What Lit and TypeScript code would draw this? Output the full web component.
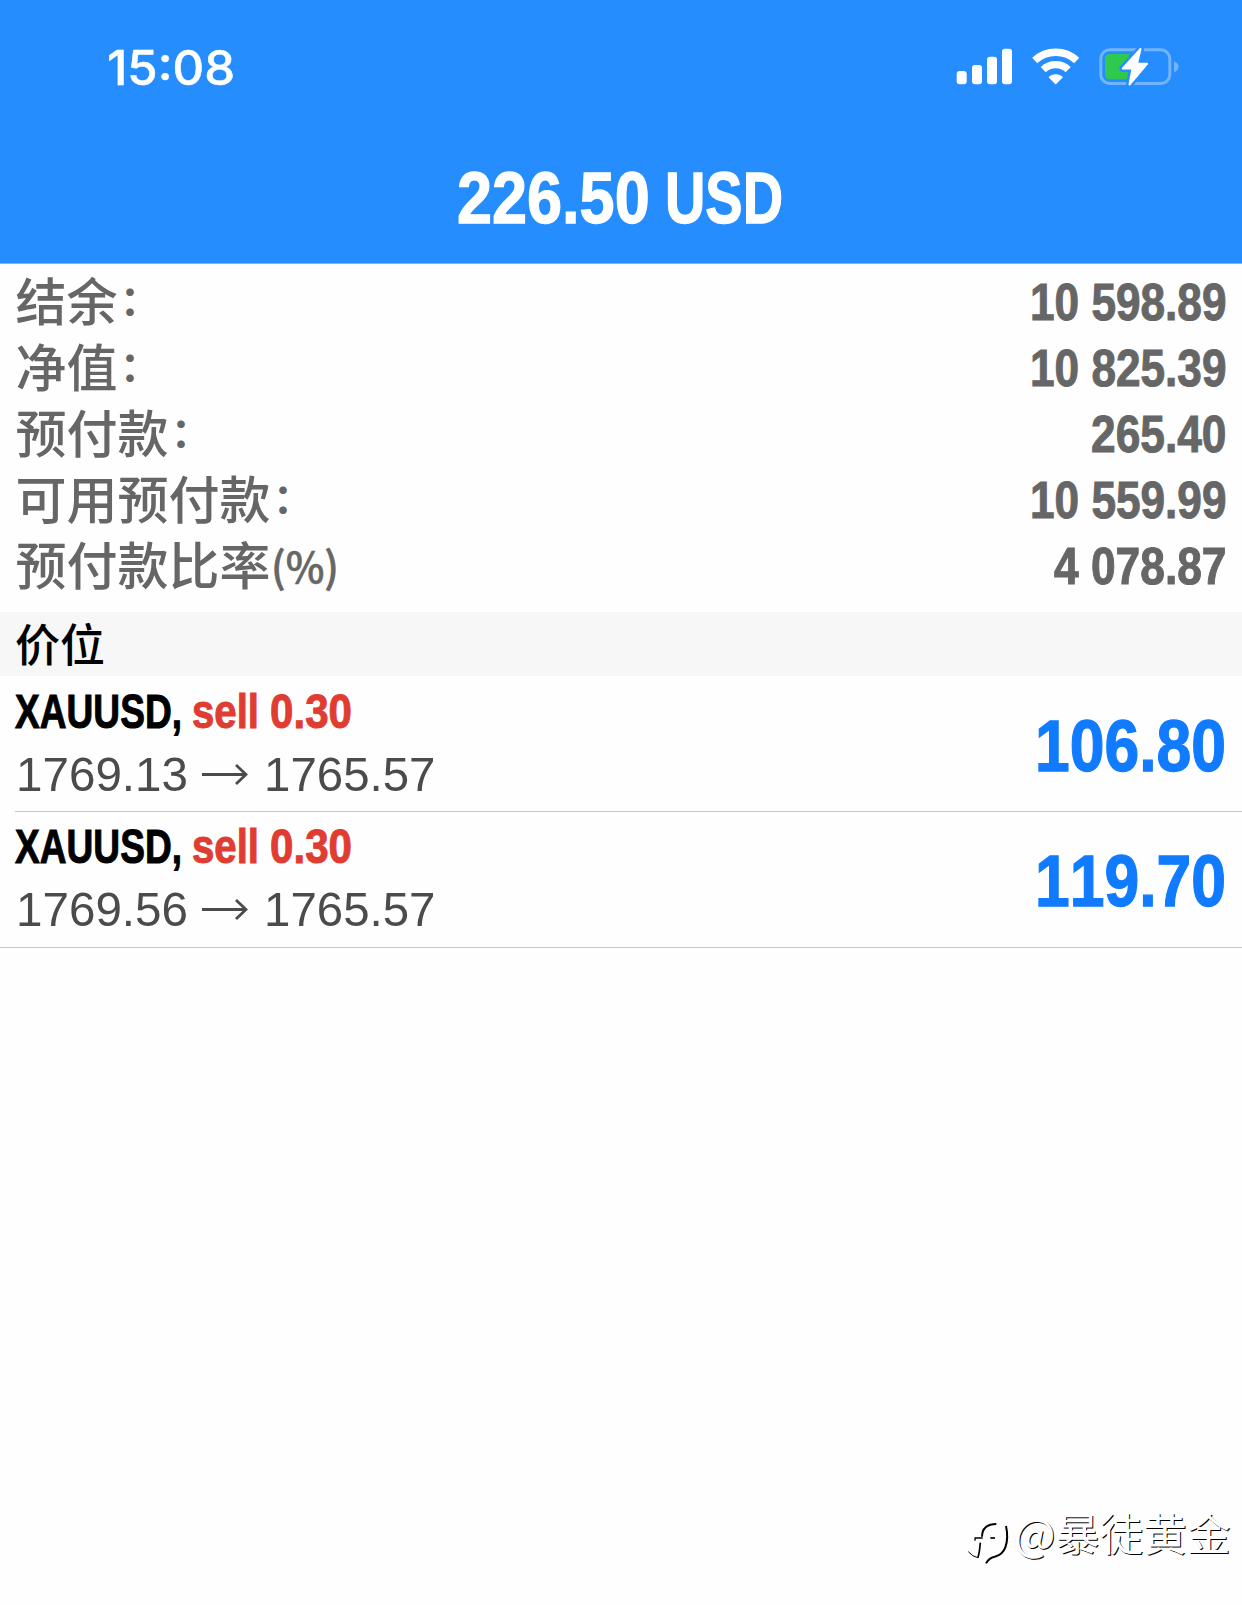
import { LitElement, html, css, svg } from "lit";
import { customElement, property } from "lit/decorators.js";

/** Real text set to an exact advance width, used for the condensed faces. Baseline sits 1em below its top. */
@customElement("fit-text")
class FitText extends LitElement {
  @property() text = "";
  @property({ type: Number }) width = 0;
  static styles = css`
    :host { display: block; line-height: 0; }
    svg { display: block; overflow: visible; height: 1.22em; }
    text { fill: currentColor; stroke: currentColor; stroke-width: var(--heavy, 0); white-space: pre; font-kerning: none; }
  `;
  render() {
    return html`<svg width=${this.width}>
      ${svg`<text x="0" y="1em" textLength=${this.width} lengthAdjust="spacingAndGlyphs">${this.text}</text>`}
    </svg>`;
  }
}

const summary = [
  { label: "结余", colon: true, value: "10 598.89", width: 196.5 },
  { label: "净值", colon: true, value: "10 825.39", width: 196.5 },
  { label: "预付款", colon: true, value: "265.40", width: 135.5 },
  { label: "可用预付款", colon: true, value: "10 559.99", width: 196.5 },
  { label: "预付款比率", colon: false, value: "4 078.87", width: 172.5 },
];

const positions = [
  { open: "1769.13", now: "1765.57", profit: "106.80" },
  { open: "1769.56", now: "1765.57", profit: "119.70" },
];

@customElement("app-root")
class AppRoot extends LitElement {
  static styles = css`
    :host {
      display: flex; flex-direction: column; position: relative;
      width: 1242px; height: 1605px; overflow: hidden; background: #fefefe;
      font-family: "Liberation Sans", "Noto Sans CJK SC", sans-serif;
    }
    * { box-sizing: border-box; }
    header { height: 264px; background: #268dff; color: #fff; border-bottom: 1px solid #86b4ee; display: flex; flex-direction: column; flex: none; }
    .status { flex: none; display: flex; justify-content: space-between; height: 100px; padding: 37px 63px 0 107px; }
    .time { font: 500 47.5px "Inter", sans-serif; --heavy: 0.5px; }
    .icons { display: block; height: 48px; width: 224px; margin-top: 3px; }
    .title { display: flex; justify-content: center; gap: 15px; padding: 50px 2px 0 0; font-size: 73px; font-weight: 700; --heavy: 1.3px; }
    .summary { flex: none; height: 348px; padding: 1px 16px 0 15.5px; display: flex; flex-direction: column; }
    .line { display: flex; height: 66px; justify-content: space-between; color: #666; }
    .label { font: 500 51px/69px "Noto Sans CJK SC", sans-serif; display: flex; }
    .colon { font-size: 40px; font-weight: 700; line-height: 67px; padding-left: 2.5px; }
    .pct { font-size: 42px; font-weight: 500; padding-top: 12px; --heavy: 0.6px; }
    .value { padding-top: 3px; font-size: 52px; font-weight: 700; --heavy: 1px; }
    .section { flex: none; height: 64px; background: #f7f7f7; padding-left: 15px; font: 500 45px/62px "Noto Sans CJK SC", sans-serif; color: #000; }
    .deal { flex: none; height: 136px; display: flex; justify-content: space-between; padding-right: 16px; margin-left: 15px; border-bottom: 1px solid #c6c6c9; }
    .deal:last-of-type { margin-left: 0; padding-left: 15px; }
    .head { display: flex; height: 66px; padding-top: 2.5px; font-size: 48.5px; font-weight: 700; color: #000; --heavy: 1px; }
    .deal:last-of-type .head { height: 65px; padding-top: 1.5px; }
    .sell { color: #e03c31; display: flex; gap: 11px; padding-left: 10px; }
    .prices { display: flex; height: 63px; font-size: 49px; color: #4b4b4b; padding-left: 1px; }
    .arrow { display: block; margin: 17px 16px 0 14px; }
    .profit { padding-top: 22px; font-size: 73px; font-weight: 700; color: #107bff; --heavy: 1.3px; }
    .deal:last-of-type .profit { padding-top: 21px; }
    .mark { position: absolute; left: 962px; top: 1502px; display: flex; color: #fff; }
    .mark svg { display: block; margin-top: 8px; }
    .mark span { font: 400 43.8px/60px "Noto Sans CJK SC", sans-serif; text-shadow: 1px 1px 0.5px #000; }
  `;
  render() {
    return html`
      <header>
        <div class="status">
          <fit-text class="time" text="15:08" width="128"></fit-text>
          <svg class="icons" width="224" height="48" viewBox="0 0 224 48" fill="#fff">
            <rect x="1.700" y="31" width="10" height="13.300" rx="3"/>
            <rect x="17" y="25" width="10" height="19.300" rx="3"/>
            <rect x="32" y="16.700" width="10" height="27.600" rx="3"/>
            <rect x="47" y="8.700" width="10" height="35.600" rx="3"/>
            <g fill="none" stroke="#fff" stroke-width="7.400">
              <path d="M79.700 20.500A30.800 30.800 0 0 1 121.700 20.500"/>
              <path d="M88.200 29.600A18.300 18.300 0 0 1 113.200 29.600"/>
            </g>
            <path d="M100.700 43.400 94.500 37.200A10 10 0 0 1 106.900 37.200Z" stroke="#fff" stroke-width="1.500" stroke-linejoin="round"/>
            <rect x="145.800" y="9.800" width="69" height="33.700" rx="9" fill="none" stroke="#73b5fd" stroke-width="3"/>
            <path d="M219 21.300Q223.500 23 223.500 26.800T219 32.300Z" fill="#73b5fd"/>
            <path d="M155 14H174V39.300H155Q150 39.300 150 34.300V19Q150 14 155 14Z" fill="#30c94f"/>
            <path d="M185.500 9 167.800 28.500H177.500L174.500 44.500 192 23.800H182Z" stroke="#268dff" stroke-width="7" stroke-linejoin="round"/>
            <path d="M185.500 9 167.800 28.500H177.500L174.500 44.500 192 23.800H182Z" stroke="#fff" stroke-width="2" stroke-linejoin="round"/>
          </svg>
        </div>
        <div class="title">
          <fit-text text="226.50" width="192.700"></fit-text>
          <fit-text text="USD" width="118"></fit-text>
        </div>
      </header>
      <section class="summary">
        ${summary.map((r) => html`<div class="line">
          <div class="label"><span>${r.label}</span>${r.colon
            ? html`<span class="colon">：</span>`
            : html`<fit-text class="pct" text="(%)" width="68"></fit-text>`}</div>
          <fit-text class="value" text=${r.value} width=${r.width}></fit-text>
        </div>`)}
      </section>
      <div class="section">价位</div>
      ${positions.map((p) => html`<article class="deal">
        <div>
          <div class="head">
            <fit-text text="XAUUSD," width="167"></fit-text>
            <span class="sell"><fit-text text="sell" width="67"></fit-text><fit-text text="0.30" width="82"></fit-text></span>
          </div>
          <div class="prices">
            <fit-text text=${p.open} width="172"></fit-text>
            <svg class="arrow" width="46" height="32" viewBox="0 0 46 32" fill="none" stroke="#4b4b4b" stroke-width="2.800"><path d="M0 15.500H44M34 6 44 15.500 34 25"/></svg>
            <fit-text text=${p.now} width="171.500"></fit-text>
          </div>
        </div>
        <fit-text class="profit" text=${p.profit} width="191"></fit-text>
      </article>`)}
      <div class="mark">
        <svg width="52" height="56" viewBox="0 0 156 168" fill="none" stroke="#000" stroke-linejoin="round">
          <path d="M60 80Q60 43 103 42" stroke-width="6"/>
          <path d="M39 92V84H62" stroke-width="4"/>
          <path d="M55 98Q53 125 48 143" stroke-width="5"/>
          <path d="M48 143Q32 141 19 125" stroke-width="3"/>
          <path d="M85 84H99" stroke-width="5"/>
          <path d="M132 48Q140 85 130 112Q122 134 98 140Q80 144 72 160" stroke-width="6"/>
        </svg>
        <span>@暴徒黄金</span>
      </div>
    `;
  }
}
